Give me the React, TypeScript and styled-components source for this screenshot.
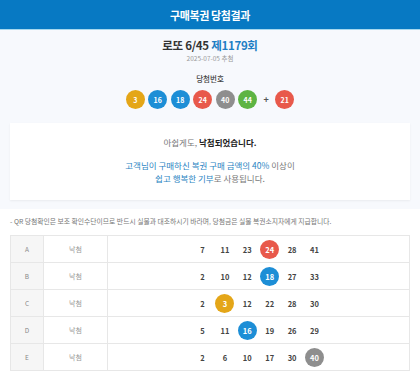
import { FC } from "react";
import styled, { createGlobalStyle } from "styled-components";

const GlobalStyle = createGlobalStyle`
  body {
    margin: 0;
    background: #ffffff;
    font-family: "Noto Sans CJK KR", "Noto Sans", sans-serif;
    color: #333;
  }
`;

const winning = [3, 16, 18, 24, 40, 44];
const bonus = 21;

const games = [
  { label: "A", nums: [7, 11, 23, 24, 28, 41] },
  { label: "B", nums: [2, 10, 12, 18, 27, 33] },
  { label: "C", nums: [2, 3, 12, 22, 28, 30] },
  { label: "D", nums: [5, 11, 16, 19, 26, 29] },
  { label: "E", nums: [2, 6, 10, 17, 30, 40] },
];

const ballColor = (n: number) => {
  if (n <= 10) return "#e4a618";
  if (n <= 20) return "#1d8ed6";
  if (n <= 30) return "#e8594b";
  if (n <= 40) return "#8e8e8e";
  return "#5db443";
};

const App: FC = () => {
  return (
    <Page>
      <GlobalStyle />
      <Header>구매복권 당첨결과</Header>

      <Summary>
        <Title>
          로또 6/45 <Round>제1179회</Round>
        </Title>
        <DrawDate>2025-07-05 추첨</DrawDate>
        <Label>당첨번호</Label>
        <Balls>
          {winning.map((n) => (
            <Ball key={n} color={ballColor(n)}>
              {n}
            </Ball>
          ))}
          <Plus>+</Plus>
          <Ball color={ballColor(bonus)}>{bonus}</Ball>
        </Balls>

        <ResultBox>
          <ResultText>
            아쉽게도, <strong>낙첨되었습니다.</strong>
          </ResultText>
          <Donation>
            <Blue>고객님이 구매하신 복권 구매 금액의 40%</Blue> 이상이
            <br />
            <Blue>쉽고 행복한 기부</Blue>로 사용됩니다.
          </Donation>
        </ResultBox>
      </Summary>

      <Notice>
        - QR 당첨확인은 보조 확인수단이므로 반드시 실물과 대조하시기 바라며, 당첨금은 실물 복권소지자에게 지급합니다.
      </Notice>

      <Table>
        <tbody>
          {games.map((g) => (
            <tr key={g.label}>
              <GameCell>{g.label}</GameCell>
              <StatusCell>낙첨</StatusCell>
              <NumCell>
                <NumRow>
                  {g.nums.map((n) => {
                    const hit = winning.includes(n);
                    return (
                      <Num key={n} $hit={hit} color={ballColor(n)}>
                        {n}
                      </Num>
                    );
                  })}
                </NumRow>
              </NumCell>
            </tr>
          ))}
        </tbody>
      </Table>
    </Page>
  );
};

export default App;

const Page = styled.div`
  width: 420px;
`;

const Header = styled.div`
  height: 30px;
  background: #0779c3;
  border-bottom: 1px solid #a6d8ee;
  color: #fff;
  font-size: 11px;
  font-weight: 700;
  letter-spacing: -0.4px;
  display: flex;
  align-items: center;
  justify-content: center;
  box-sizing: border-box;
`;

const Summary = styled.div`
  background: #f7f9fd;
  padding: 8px 10px 9px;
  display: flex;
  flex-direction: column;
  align-items: center;
`;

const Title = styled.div`
  font-size: 11.5px;
  font-weight: 700;
  line-height: 14px;
  color: #333;
  letter-spacing: -0.3px;
`;

const Round = styled.span`
  color: #1d7ec4;
`;

const DrawDate = styled.div`
  font-size: 6.5px;
  line-height: 10px;
  color: #9a9a9a;
  margin-top: 1px;
`;

const Label = styled.div`
  font-size: 7.5px;
  font-weight: 500;
  line-height: 10px;
  color: #444;
  margin-top: 11px;
`;

const Balls = styled.div`
  display: flex;
  align-items: center;
  gap: 3.5px;
  margin-top: 6px;
`;

const Ball = styled.div<{ color: string }>`
  width: 19px;
  height: 19px;
  border-radius: 50%;
  background: ${(p) => p.color};
  color: #fff;
  font-size: 7px;
  font-weight: 700;
  display: flex;
  align-items: center;
  justify-content: center;
`;

const Plus = styled.div`
  width: 11px;
  text-align: center;
  font-size: 9px;
  font-weight: 700;
  color: #555;
`;

const ResultBox = styled.div`
  align-self: stretch;
  margin-top: 14px;
  background: #fff;
  box-shadow: 0 1px 2px rgba(0, 0, 0, 0.06);
  padding: 13px 0 15px;
  text-align: center;
`;

const ResultText = styled.div`
  font-size: 8.5px;
  line-height: 12px;
  color: #777;

  strong {
    color: #222;
    font-weight: 700;
  }
`;

const Donation = styled.div`
  margin-top: 11px;
  font-size: 8.5px;
  line-height: 13px;
  color: #777;
`;

const Blue = styled.span`
  color: #2b84c2;
`;

const Notice = styled.div`
  margin: 7px 10px 0;
  font-size: 6.8px;
  line-height: 10px;
  color: #777;
`;

const Table = styled.table`
  margin: 9px 10px 0;
  width: 400px;
  border-collapse: collapse;
  table-layout: fixed;

  td {
    border: 1px solid #e7e7e7;
    height: 26px;
    padding: 0;
    text-align: center;
  }
`;

const GameCell = styled.td`
  width: 32px;
  background: #f6f6f6;
  color: #888;
  font-size: 6.5px;
`;

const StatusCell = styled.td`
  width: 63px;
  color: #999;
  font-size: 7px;
`;

const NumCell = styled.td``;

const NumRow = styled.div`
  display: flex;
  justify-content: center;
  gap: 3.4px;
`;

const Num = styled.div<{ $hit: boolean; color: string }>`
  width: 19px;
  height: 19px;
  border-radius: 50%;
  display: flex;
  align-items: center;
  justify-content: center;
  font-size: 7.5px;
  font-weight: 700;
  background: ${(p) => (p.$hit ? p.color : "transparent")};
  color: ${(p) => (p.$hit ? "#fff" : "#444")};
`;
